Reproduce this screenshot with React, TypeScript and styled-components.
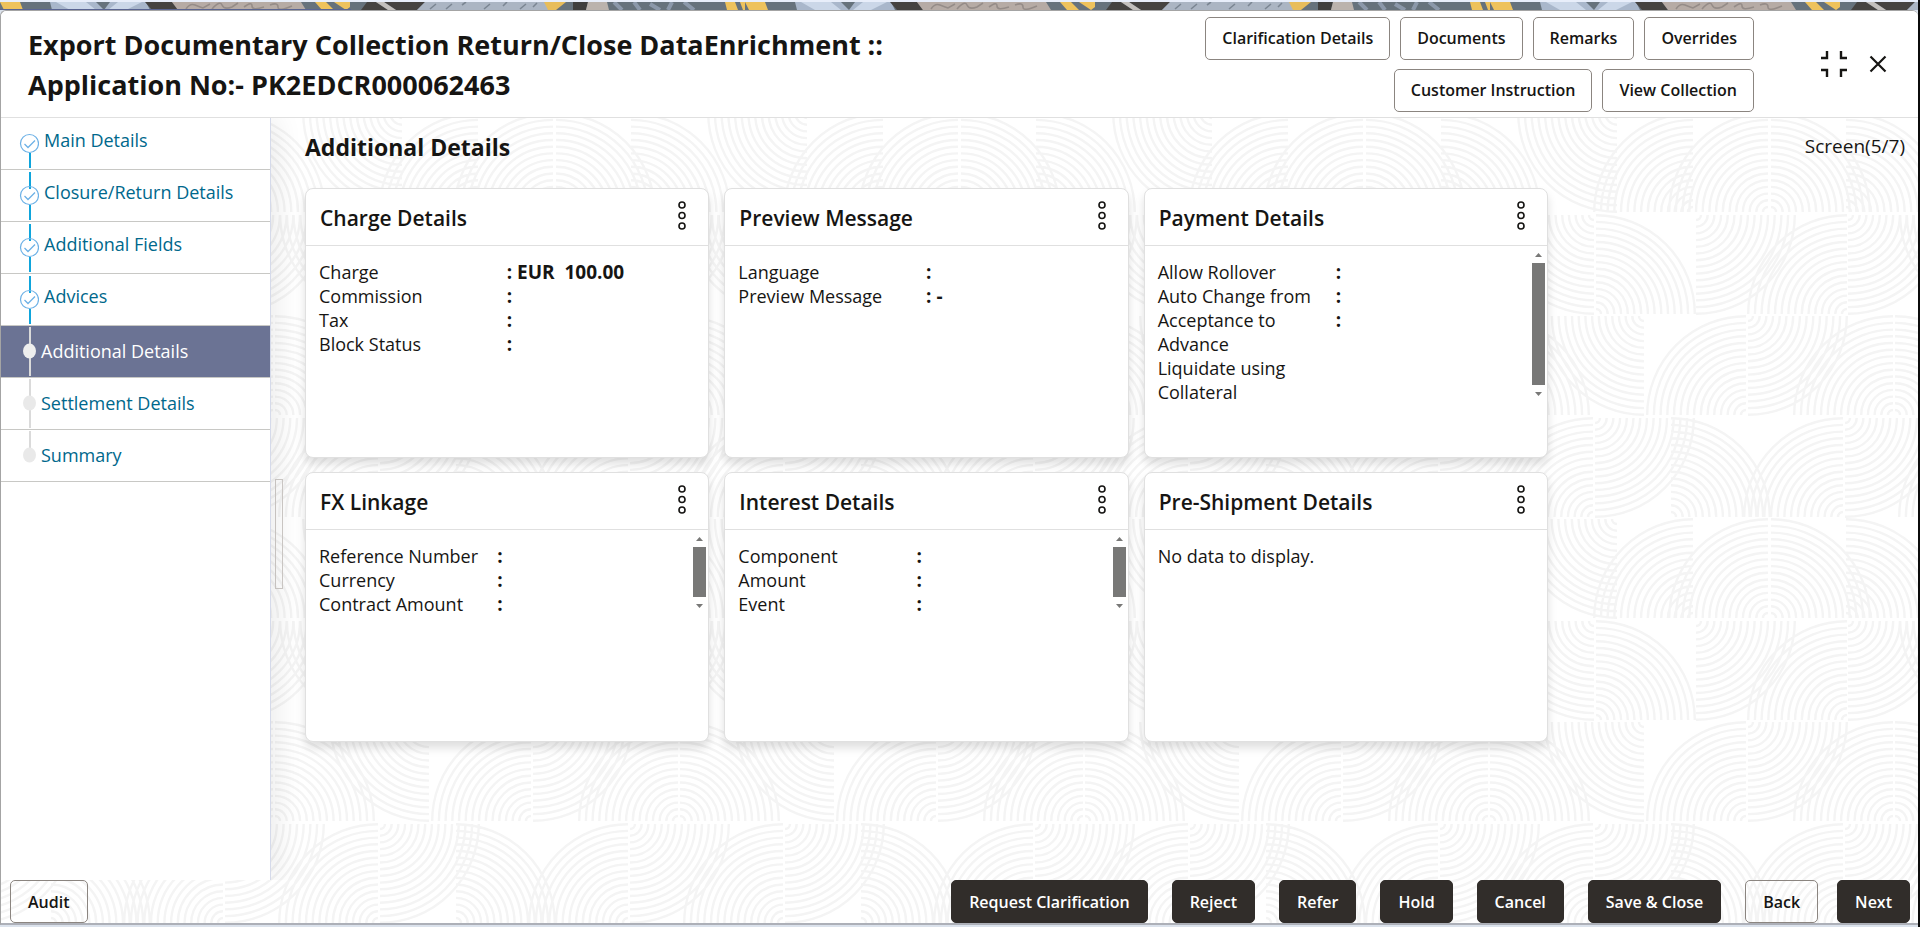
import React from "react";
import styled, { createGlobalStyle, css } from "styled-components";

type Fan = [cx: number, row: number, from: "top" | "bottom", dir: 1 | -1];

const TILE_WIDTH = 405;
const TILE_HEIGHT = 406;
const ROW_STARTS = [0, 102, 203, 305];

const fans: Fan[] = [
  [117, 0, "top", -1],
  [193, 0, "bottom", -1],
  [268, 0, "bottom", -1],
  [271, 0, "bottom", 1],
  [346, 0, "bottom", 1],
  [94, 1, "top", -1],
  [96, 1, "bottom", 1],
  [196, 1, "top", 1],
  [347, 1, "bottom", -1],
  [348, 1, "top", 1],
  [144, 2, "top", -1],
  [246, 2, "bottom", -1],
  [248, 2, "top", 1],
  [393, 2, "bottom", -1],
  [395, 2, "bottom", 1],
  [93, 3, "bottom", -1],
  [95, 3, "top", 1],
  [171, 3, "bottom", 1],
  [343, 3, "bottom", -1],
  [345, 3, "top", 1],
];

function fanPath([cx, row, from, dir]: Fan, shift: number) {
  const x = cx + shift;
  const y = from === "top" ? ROW_STARTS[row] + 1 : ROW_STARTS[row] + 100;
  const v = from === "top" ? 1 : -1;
  const sweep = dir * v > 0 ? 0 : 1;
  let d = "";
  for (let i = 0; i < 15; i++) {
    const r = 5 + i * 6.7;
    d += `M${x} ${y + v * r}A${r} ${r} 0 0 ${sweep} ${x + dir * r} ${y}`;
  }
  return d;
}

const tileSvg = `<svg xmlns='http://www.w3.org/2000/svg' width='${TILE_WIDTH}' height='${TILE_HEIGHT}'><path fill='none' stroke='#f4f4f4' stroke-width='2.4' d='${fans
  .flatMap((f) => [fanPath(f, 0), fanPath(f, TILE_WIDTH), fanPath(f, -TILE_WIDTH)])
  .join("")}'/></svg>`;
const tileUrl = `url("data:image/svg+xml,${encodeURIComponent(tileSvg).replace(/'/g, "%27")}")`;

const Global = createGlobalStyle`
  * { box-sizing: border-box; }
  body {
    margin: 0;
    background: #dbe2ec;
    color: #161513;
    font-family: "Open Sans", "Noto Sans", sans-serif;
    font-size: 18px;
  }
`;

const Shell = styled.div`
  min-height: 100vh;
  display: flex;
  flex-direction: column;
  border-right: 2px solid #0b0b0b;
`;

const Collage = styled.svg`
  display: block;
  width: 100%;
  height: 10px;
  flex: none;
`;

const Frame = styled.div`
  flex: 1;
  display: flex;
  flex-direction: column;
  margin-bottom: 2px;
  border: 1px solid #a4a4a4;
  border-right: 0;
  border-bottom: 2px solid #adb0b8;
  border-radius: 6px 6px 0 0;
  background: #ffffff ${tileUrl} -121px 101px;
`;

const Header = styled.header`
  display: flex;
  align-items: center;
  min-height: 107px;
  padding: 0 30px 0 27px;
  background: #fff;
  border-bottom: 1px solid #e0e0e0;
  border-radius: 6px 6px 0 0;
`;

const Title = styled.h1`
  flex: 1;
  max-width: 960px;
  margin: 0;
  padding-top: 2px;
  font-size: 27px;
  line-height: 40px;
  font-weight: 700;
`;

const HeaderActions = styled.div`
  display: flex;
  flex-wrap: wrap;
  justify-content: flex-end;
  gap: 9px 10px;
  width: 600px;
  margin-left: auto;
`;

const WindowControls = styled.div`
  display: flex;
  align-items: center;
  gap: 20px;
  margin-left: 66px;
`;

const IconButton = styled.button`
  display: flex;
  padding: 0;
  border: 0;
  background: none;
  color: #161513;
  cursor: pointer;
`;

const Button = styled.button<{ $solid?: boolean }>`
  height: 43px;
  padding: 0 16px;
  border: 1px solid #8b8580;
  border-radius: 5px;
  background: transparent;
  color: #161513;
  font: 600 16px "Open Sans", "Noto Sans", sans-serif;
  white-space: nowrap;
  cursor: pointer;
  ${(p) =>
    p.$solid &&
    css`
      border-color: #312d2a;
      background: #312d2a;
      color: #fff;
    `}
`;

const Body = styled.div`
  flex: 1;
  display: flex;
`;

const Sidebar = styled.nav`
  flex: none;
  width: 270px;
  background: #fff;
  border-right: 1px solid #d5daea;
  box-shadow: 8px 0 24px rgba(0, 0, 0, 0.07);
  clip-path: inset(0 -40px 0 0);
`;

const Steps = styled.ol`
  margin: 0;
  padding: 0;
  list-style: none;
`;

const Step = styled.li<{ $active: boolean }>`
  height: 52px;
  display: flex;
  border-bottom: 1px solid #c8c8c5;
  background: ${(p) => (p.$active ? "#6b7394" : "#fff")};
`;

const StepTrack = styled.svg`
  flex: none;
  width: 20px;
  height: 51px;
  margin-left: 18px;
`;

const StepLink = styled.a<{ $done: boolean; $active: boolean }>`
  flex: 1;
  padding-left: ${(p) => (p.$done ? 5 : 2)}px;
  line-height: ${(p) => (p.$done ? 44 : 50)}px;
  color: ${(p) => (p.$active ? "#fff" : "#00688c")};
  text-decoration: none;
`;

const Splitter = styled.div`
  flex: none;
  width: 8px;
  height: 110px;
  margin: 361px 0 0 4px;
  border: 1px solid #cfcbc8;
`;

const Main = styled.main`
  flex: 1;
  min-width: 0;
  padding: 12px 13px 32px 22px;
`;

const MainHead = styled.div`
  display: flex;
  align-items: flex-start;
  justify-content: space-between;
  height: 34px;
  margin-bottom: 24px;
`;

const Heading = styled.h2`
  margin: 0;
  font-size: 23px;
  line-height: 34px;
  font-weight: 700;
`;

const ScreenCount = styled.span`
  font-size: 19px;
  line-height: 32px;
`;

const CardGrid = styled.div`
  display: grid;
  grid-template-columns: repeat(3, minmax(0, 1fr));
  gap: 14px 15px;
  width: calc(100% - 357px);
`;

const Card = styled.section`
  min-height: 270px;
  background: #fff;
  border: 1px solid #e0e0e0;
  border-radius: 8px;
  box-shadow: 0 6px 10px rgba(0, 0, 0, 0.13);
`;

const CardHead = styled.header`
  display: flex;
  justify-content: space-between;
  height: 57px;
  padding: 11px 21px 0 14px;
  border-bottom: 1px solid #e0e0e0;
`;

const CardTitle = styled.h3`
  margin: 0;
  font-size: 21px;
  line-height: 36px;
  font-weight: 600;
`;

const CardBody = styled.div`
  display: flex;
  padding: 3px 2px 0 13px;
`;

const Fields = styled.div<{ $scroll: boolean }>`
  flex: 1;
  display: grid;
  grid-template-columns: 1fr 1fr;
  padding: 11px ${(p) => (p.$scroll ? 18 : 12)}px 0 0;
  line-height: 24px;
`;

const Labels = styled.div`
  padding-right: 12px;
`;

const Values = styled.div`
  font-size: 19px;
  font-weight: 700;
`;

const Line = styled.div`
  display: flex;
  gap: 5px;
  height: 24px;
  white-space: pre;
`;

const Label = styled.div``;

const Empty = styled.p`
  margin: 11px 0 0;
  line-height: 24px;
`;

const ScrollBar = styled.div<{ $size: number }>`
  flex: none;
  display: flex;
  flex-direction: column;
  align-items: center;
  width: 13px;
  height: ${(p) => p.$size}px;
`;

const Thumb = styled.div`
  flex: 1;
  width: 13px;
  background: #787877;
`;

const Footer = styled.footer`
  display: flex;
  gap: 24px;
  padding: 0 8px 0 9px;

  ${Button} {
    padding: 0 17px;
  }
`;

const Pair = styled.div`
  display: flex;
  gap: 19px;
`;

const Spacer = styled.div`
  flex: 1;
`;

function CollageStrip() {
  return (
    <Collage aria-hidden="true">
      <defs>
        <pattern id="collage" width="745" height="8" y="2" patternUnits="userSpaceOnUse">
          <rect width="745" height="8" fill="#66727c" />
          <path d="M0 0H20L23 8H4Z" fill="#eec25c" />
          <path d="M50 0H146L150 8H52Z" fill="#a9b7cb" />
          <path d="M56 0H86L96 8H70ZM108 8L118 0H142L126 8Z" fill="#cbd7e8" />
          <path d="M96 0H110L104 8Z" fill="#66727c" />
          <path d="M145 0H172L178 8H152Z" fill="#454341" />
          <path d="M172 0H301L306 8H178Z" fill="#b6aba5" />
          <path d="M186 7Q190 1 195 3T203 6L210 2M212 7Q220 -2 222 3T232 5L238 1M244 5Q252 -1 252 4T264 5M270 3Q278 0 278 5T292 4" fill="none" stroke="#958c88" strokeWidth="1.6" />
          <path d="M315 0H326L334 8H322ZM334 0H350V5L346 8Z" fill="#eec25c" />
          <path d="M367 0H376L388 8H361ZM384 0H425L417 8H396Z" fill="#454341" />
          <path d="M376 0H384L396 8H388Z" fill="#c3c0bd" />
          <path d="M425 0H545L549 8H417Z" fill="#abb5c3" />
          <path d="M430 7L436 2M446 7L452 2M462 3L466 0M484 7L490 2M503 4L507 0M520 7L526 2M533 5L537 1" stroke="#7b8693" strokeWidth="1.6" />
          <path d="M544 0H566L556 8H548Z" fill="#e8bd5b" />
          <path d="M573 0H588L586 8H573Z" fill="#403f3e" />
          <path d="M588 0H607L609 8H586Z" fill="#bbb3ad" />
          <path d="M614 0L622 8M634 0L640 8M650 2L660 8M668 8L672 0M684 0L694 8" stroke="#8b98aa" strokeWidth="4" />
          <path d="M725 0H735L738 8H727ZM740 0H745V8H743Z" fill="#eec25c" />
        </pattern>
      </defs>
      <rect width="100%" height="2" fill="#e8eefa" />
      <rect y="2" width="100%" height="8" fill="url(#collage)" />
      <rect y="9" width="351" height="1" fill="#5a6592" />
    </Collage>
  );
}

function Track({ kind, first, last }: { kind: "done" | "active" | "todo"; first: boolean; last: boolean }) {
  if (kind === "done") {
    return (
      <StepTrack viewBox="0 0 20 51" aria-hidden="true">
        {!first && <path d="M11 2V19" stroke="#0fa5dc" strokeWidth="2" />}
        <path d="M11 35V50" stroke="#0fa5dc" strokeWidth="2" />
        <circle cx="10.5" cy="25.5" r="9" fill="none" stroke="#6db1e6" strokeWidth="1.2" />
        <path d="M5.5 26L9 29.5L16 22.5" fill="none" stroke="#6db1e6" strokeWidth="1.3" />
      </StepTrack>
    );
  }
  return (
    <StepTrack viewBox="0 0 20 51" aria-hidden="true">
      <path d={last ? "M11 1V20" : "M11 1V50"} stroke="#dadada" strokeWidth="2" />
      <ellipse cx="10.5" cy="25" rx="6.5" ry="7.5" fill={kind === "active" ? "#eeeeee" : "#e9e9e9"} />
    </StepTrack>
  );
}

function MoreIcon() {
  return (
    <svg width="10" height="34" viewBox="0 0 10 34" fill="none" stroke="#161513" strokeWidth="1.6" aria-hidden="true">
      <circle cx="5" cy="5" r="3" />
      <circle cx="5" cy="15.5" r="3" />
      <circle cx="5" cy="26" r="3" />
    </svg>
  );
}

const steps = [
  "Main Details",
  "Closure/Return Details",
  "Additional Fields",
  "Advices",
  "Additional Details",
  "Settlement Details",
  "Summary",
];
const current = 4;

interface Panel {
  title: string;
  labels: string[];
  values: string[];
  scroll?: number;
}

const panels: Panel[] = [
  { title: "Charge Details", labels: ["Charge", "Commission", "Tax", "Block Status"], values: ["EUR  100.00", "", "", ""] },
  { title: "Preview Message", labels: ["Language", "Preview Message"], values: ["", "-"] },
  {
    title: "Payment Details",
    labels: ["Allow Rollover", "Auto Change from Acceptance to Advance", "Liquidate using Collateral"],
    values: ["", "", ""],
    scroll: 150,
  },
  { title: "FX Linkage", labels: ["Reference Number", "Currency", "Contract Amount"], values: ["", "", ""], scroll: 78 },
  { title: "Interest Details", labels: ["Component", "Amount", "Event"], values: ["", "", ""], scroll: 78 },
  { title: "Pre-Shipment Details", labels: [], values: [] },
];

function PanelCard({ panel }: { panel: Panel }) {
  return (
    <Card>
      <CardHead>
        <CardTitle>{panel.title}</CardTitle>
        <IconButton aria-label={`${panel.title} options`}>
          <MoreIcon />
        </IconButton>
      </CardHead>
      <CardBody>
        {panel.labels.length === 0 ? (
          <Empty>No data to display.</Empty>
        ) : (
          <Fields $scroll={!!panel.scroll}>
            <Labels>
              {panel.labels.map((l) => (
                <Label key={l}>{l}</Label>
              ))}
            </Labels>
            <Values>
              {panel.values.map((v, i) => (
                <Line key={i}>
                  <span>:</span>
                  {v && <span>{v}</span>}
                </Line>
              ))}
            </Values>
          </Fields>
        )}
        {panel.scroll && (
          <ScrollBar $size={panel.scroll} aria-hidden="true">
            <svg width="13" height="14" viewBox="0 0 13 14">
              <path d="M3 8L6.5 4L10 8Z" fill="#787877" />
            </svg>
            <Thumb />
            <svg width="13" height="14" viewBox="0 0 13 14">
              <path d="M3 7L6.5 11L10 7Z" fill="#787877" />
            </svg>
          </ScrollBar>
        )}
      </CardBody>
    </Card>
  );
}

export default function App() {
  return (
    <Shell>
      <Global />
      <CollageStrip />
      <Frame>
        <Header>
          <Title>
            Export Documentary Collection Return/Close DataEnrichment ::
            <br />
            Application No:- PK2EDCR000062463
          </Title>
          <HeaderActions>
            {["Clarification Details", "Documents", "Remarks", "Overrides", "Customer Instruction", "View Collection"].map((b) => (
              <Button key={b}>{b}</Button>
            ))}
          </HeaderActions>
          <WindowControls>
            <IconButton aria-label="Collapse">
              <svg width="28" height="28" viewBox="0 0 28 28" fill="none" stroke="currentColor" strokeWidth="2.4">
                <path d="M1 8H7V1M27 8H21V1M1 20H7V27M27 20H21V27" />
              </svg>
            </IconButton>
            <IconButton aria-label="Close">
              <svg width="20" height="20" viewBox="0 0 20 20" fill="none" stroke="currentColor" strokeWidth="2.2">
                <path d="M2.5 2.5L17.5 17.5M17.5 2.5L2.5 17.5" />
              </svg>
            </IconButton>
          </WindowControls>
        </Header>
        <Body>
          <Sidebar>
            <Steps>
              {steps.map((s, i) => (
                <Step key={s} $active={i === current}>
                  <Track
                    kind={i < current ? "done" : i === current ? "active" : "todo"}
                    first={i === 0}
                    last={i === steps.length - 1}
                  />
                  <StepLink href="#" $done={i < current} $active={i === current}>
                    {s}
                  </StepLink>
                </Step>
              ))}
            </Steps>
          </Sidebar>
          <Splitter />
          <Main>
            <MainHead>
              <Heading>Additional Details</Heading>
              <ScreenCount>Screen(5/7)</ScreenCount>
            </MainHead>
            <CardGrid>
              {panels.map((p) => (
                <PanelCard key={p.title} panel={p} />
              ))}
            </CardGrid>
          </Main>
        </Body>
        <Footer>
          <Button>Audit</Button>
          <Spacer />
          {["Request Clarification", "Reject", "Refer", "Hold", "Cancel", "Save & Close"].map((b) => (
            <Button key={b} $solid>
              {b}
            </Button>
          ))}
          <Pair>
            <Button>Back</Button>
            <Button $solid>Next</Button>
          </Pair>
        </Footer>
      </Frame>
    </Shell>
  );
}
